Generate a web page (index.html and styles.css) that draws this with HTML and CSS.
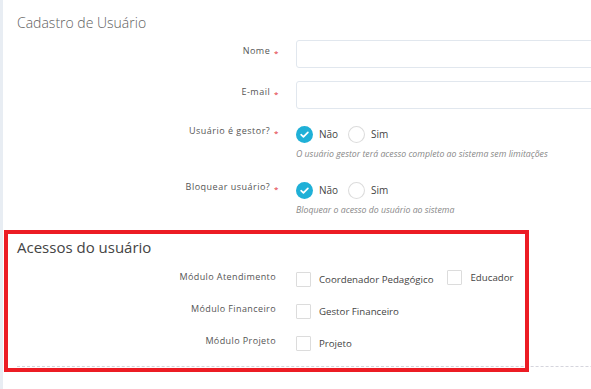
FILE: index.html
```html
<!DOCTYPE html>
<html lang="pt-BR">
<head>
  <meta charset="UTF-8">
  <meta name="viewport" content="width=device-width, initial-scale=1.0">
  <title>Cadastro de Usuário</title>
  <link rel="stylesheet" href="styles.css">
</head>
<body>
  <div class="page">
    <form class="panel">
      <h3 class="panel-title">Cadastro de Usuário</h3>

      <div class="field field-text">
        <label class="field-label">Nome <span class="req">*</span></label>
        <div class="field-control">
          <input type="text" class="input">
        </div>
      </div>

      <div class="field field-text">
        <label class="field-label">E-mail <span class="req">*</span></label>
        <div class="field-control">
          <input type="email" class="input">
        </div>
      </div>

      <div class="field field-choice">
        <label class="field-label">Usuário é gestor? <span class="req">*</span></label>
        <div class="field-control">
          <div class="radio-list">
            <span class="radio checked">
              <svg viewBox="0 0 16 16" width="17" height="17"><circle cx="8" cy="8" r="8" fill="#1fb0d7"/><path d="M4.8 8.2 L7 10.3 L11.2 6" fill="none" stroke="#fff" stroke-width="1.6" stroke-linecap="round" stroke-linejoin="round"/></svg>
              Não
            </span>
            <span class="radio">
              <svg viewBox="0 0 16 16" width="17" height="17"><circle cx="8" cy="8" r="7.5" fill="#fff" stroke="#dcdcdc"/></svg>
              Sim
            </span>
          </div>
          <p class="help">O usuário gestor terá acesso completo ao sistema sem limitações</p>
        </div>
      </div>

      <div class="field field-choice">
        <label class="field-label">Bloquear usuário? <span class="req">*</span></label>
        <div class="field-control">
          <div class="radio-list">
            <span class="radio checked">
              <svg viewBox="0 0 16 16" width="17" height="17"><circle cx="8" cy="8" r="8" fill="#1fb0d7"/><path d="M4.8 8.2 L7 10.3 L11.2 6" fill="none" stroke="#fff" stroke-width="1.6" stroke-linecap="round" stroke-linejoin="round"/></svg>
              Não
            </span>
            <span class="radio">
              <svg viewBox="0 0 16 16" width="17" height="17"><circle cx="8" cy="8" r="7.5" fill="#fff" stroke="#dcdcdc"/></svg>
              Sim
            </span>
          </div>
          <p class="help">Bloquear o acesso do usuário ao sistema</p>
        </div>
      </div>

      <section class="access">
        <h3 class="access-title">Acessos do usuário</h3>

        <div class="module">
          <span class="module-label">Módulo Atendimento</span>
          <div class="module-options">
            <label class="check"><span class="box"></span>Coordenador Pedagógico</label>
            <label class="check check-raised"><span class="box"></span>Educador</label>
          </div>
        </div>

        <div class="module">
          <span class="module-label">Módulo Financeiro</span>
          <div class="module-options">
            <label class="check"><span class="box"></span>Gestor Financeiro</label>
          </div>
        </div>

        <div class="module">
          <span class="module-label">Módulo Projeto</span>
          <div class="module-options">
            <label class="check"><span class="box"></span>Projeto</label>
          </div>
        </div>
      </section>
    </form>

    <!-- annotation drawn over the screenshot -->
    <div class="highlight"></div>
  </div>
</body>
</html>
```

FILE: styles.css
```css
* {
  margin: 0;
  padding: 0;
  box-sizing: border-box;
}

body {
  font-family: 'Open Sans', 'Liberation Sans', sans-serif;
  background: #fff;
  color: #555;
  overflow: hidden;
}

.page {
  position: relative;
  min-height: 100vh;
  border-left: 3px solid #e8edf3;
}

/* Form panel */
.panel {
  width: 760px;
  padding: 13px 0 0 14px;
}

.panel-title {
  font-size: 14px;
  line-height: 20px;
  font-weight: 300;
  color: #5e5e5e;
  margin-bottom: 7px;
}

/* Field rows */
.field {
  display: flex;
  gap: 17px;
}

.field-label {
  width: 262px;
  flex-shrink: 0;
  text-align: right;
  font-size: 9px;
  line-height: 14px;
  letter-spacing: 0.5px;
  color: #555;
}

.req {
  color: #e02b36;
  font-size: 8px;
  margin-left: 1px;
  vertical-align: -2px;
}

.field-control {
  flex: 1;
}

.field-text {
  margin-bottom: 13px;
}

.field-text .field-label {
  padding-top: 4px;
}

.field-text + .field-choice {
  margin-top: 15px;
}

.field-choice {
  margin-bottom: 20px;
}

.input {
  display: block;
  width: 100%;
  height: 28px;
  border: 1px solid #e1e7ee;
  border-radius: 3px;
  background: #fff;
  outline: none;
}

/* Radios */
.radio-list {
  display: flex;
  align-items: center;
  gap: 10px;
  height: 20px;
}

.radio {
  display: flex;
  align-items: center;
  gap: 6px;
  font-size: 10px;
  color: #444;
}

.radio svg {
  display: block;
}

.help {
  margin-top: 4px;
  font-size: 8.75px;
  line-height: 12px;
  font-style: italic;
  color: #888;
}

/* Access section */
.access {
  margin-top: 21px;
  padding-bottom: 14px;
  border-bottom: 1px dashed #d5d5dd;
}

.access-title {
  font-size: 15px;
  line-height: 20px;
  font-weight: 400;
  color: #444;
  margin-bottom: 13px;
}

.module {
  display: flex;
  gap: 20px;
  margin-bottom: 14px;
}

.module:last-child {
  margin-bottom: 0;
}

.module-label {
  width: 259px;
  flex-shrink: 0;
  text-align: right;
  font-size: 9px;
  line-height: 14px;
  letter-spacing: 0.4px;
  color: #555;
}

.module-options {
  display: flex;
  gap: 14px;
}

.check {
  display: flex;
  align-items: center;
  gap: 8px;
  height: 18px;
  font-size: 9.7px;
  color: #444;
}

.check-raised {
  margin-top: -2px;
}

.box {
  width: 15px;
  height: 15px;
  border: 1px solid #dcdcdc;
  border-radius: 1px;
  background: #fff;
}

/* Red highlight overlay */
.highlight {
  position: absolute;
  left: 1px;
  top: 230px;
  width: 525px;
  height: 142px;
  border: 4px solid #ec1c24;
  pointer-events: none;
}
```
